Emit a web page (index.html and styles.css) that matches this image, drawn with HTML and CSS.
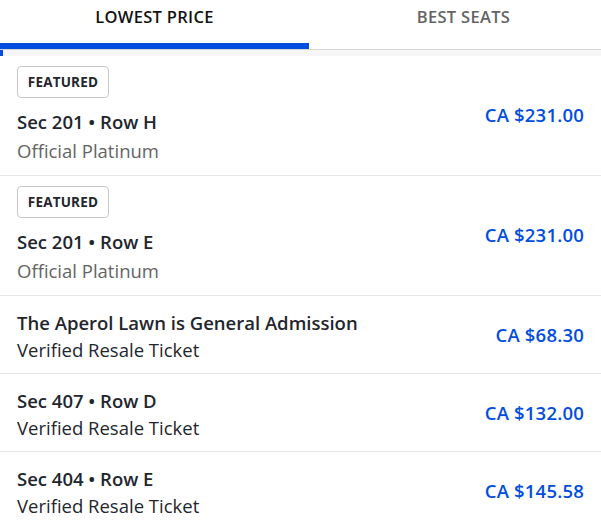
FILE: index.html
```html
<!DOCTYPE html>
<html>
<head>
<meta charset="utf-8">
<link rel="stylesheet" href="styles.css">
</head>
<body>
<div class="page">
  <div class="tabs">
    <div class="tab active">LOWEST PRICE</div>
    <div class="tab">BEST SEATS</div>
  </div>
  <div class="gap"></div>
  <ul class="list">
    <li class="item featured">
      <div class="info">
        <span class="badge">FEATURED</span>
        <div class="title">Sec 201 • Row H</div>
        <div class="sub muted">Official Platinum</div>
      </div>
      <div class="price">CA $231.00</div>
    </li>
    <li class="item featured">
      <div class="info">
        <span class="badge">FEATURED</span>
        <div class="title">Sec 201 • Row E</div>
        <div class="sub muted">Official Platinum</div>
      </div>
      <div class="price">CA $231.00</div>
    </li>
    <li class="item">
      <div class="info">
        <div class="title">The Aperol Lawn is General Admission</div>
        <div class="sub">Verified Resale Ticket</div>
      </div>
      <div class="price">CA $68.30</div>
    </li>
    <li class="item">
      <div class="info">
        <div class="title">Sec 407 • Row D</div>
        <div class="sub">Verified Resale Ticket</div>
      </div>
      <div class="price">CA $132.00</div>
    </li>
    <li class="item">
      <div class="info">
        <div class="title">Sec 404 • Row E</div>
        <div class="sub">Verified Resale Ticket</div>
      </div>
      <div class="price">CA $145.58</div>
    </li>
  </ul>
</div>
</body>
</html>
```
FILE: styles.css
```css
* { box-sizing: border-box; }
html, body { margin: 0; padding: 0; background: #fff; }
body { font-family: "Open Sans", "Liberation Sans", sans-serif; color: #1f262d; overflow: hidden; }
.page { width: 601px; overflow: hidden; }
.tabs { display: flex; width: 618px; height: 50px; border-bottom: 1px solid #d6d6d6; }
.tab { width: 309px; flex: none; text-align: center; font-size: 16.5px; font-weight: 600; letter-spacing: 0.3px; color: #646464; padding-top: 6px; line-height: 22px; height: 49px; border-bottom: 6px solid transparent; }
.tab.active { color: #121212; border-bottom-color: #024ddf; }
.gap { height: 6px; background: #f6f6f6; border-left: 3px solid #024ddf; }
.list { list-style: none; margin: 0; padding: 0; }
.item { display: flex; align-items: center; justify-content: space-between; padding: 13px 17px 10px 17px; border-bottom: 1px solid #e6e6e6; }
.item.featured { padding-top: 10px; padding-bottom: 9px; }
.badge { display: inline-block; height: 32px; width: 92px; line-height: 30px; border: 1px solid #c8c8c8; border-radius: 4px; text-align: center; font-size: 13.5px; font-weight: 700; letter-spacing: 0.2px; color: #1f262d; margin-bottom: 10px; }
.title { font-size: 18.5px; font-weight: 600; line-height: 27px; }
.featured .title { line-height: 28px; }
.sub { font-size: 18.5px; line-height: 27px; }
.featured .sub { line-height: 30px; }
.muted { color: #646464; }
.price { color: #024ddf; font-size: 18.5px; font-weight: 600; margin-bottom: 4px; letter-spacing: 0.2px; }
```
